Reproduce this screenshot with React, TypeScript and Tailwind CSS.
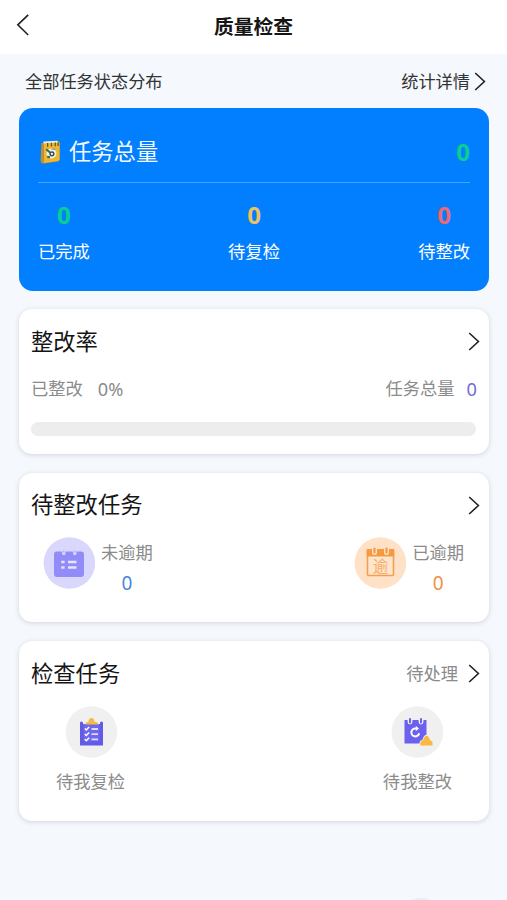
import type { ReactNode } from 'react'

function ChevronRight() {
  return (
    <svg className="block h-[19px] w-3 shrink-0" viewBox="0 0 12 19" fill="none" stroke="#222" strokeWidth="1.6">
      <path d="M1.2 1 L10.4 9.5 L1.2 18" />
    </svg>
  )
}

function NotebookIcon() {
  return (
    <svg className="block h-[25px] w-[21px] shrink-0" viewBox="0 0 22 26">
      <path d="M1.5 3 L18.5 1 Q20.5 1 20.5 3 L20.5 20 Q20.5 22 18.5 22.3 L4 24.6 Q0.5 24.5 0.6 21 Z" fill="#bd9134" />
      <path d="M3.5 1.6 L18 .7 L19.5 3 L4 4.2 Z" fill="#e8edda" />
      <path d="M4.2 3.6 L20.5 2.4 L20.5 20.2 Q20.5 21.6 18.8 21.9 L4.2 24 Z" fill="#f0b62d" />
      <path d="M8 3v4M12 2.8v4M16 2.4v4M19 2.2v4" stroke="#5b572f" strokeWidth="1.3" />
      <circle cx="12" cy="14" r="5.2" fill="#eef1e5" />
      <path d="M6.5 9.5l4 3.5M7.5 17.5l3 .5" stroke="#306a68" strokeWidth="2" />
      <circle cx="12.5" cy="14.4" r="2" fill="none" stroke="#34514e" strokeWidth="1.5" />
      <path d="M12 9.5h4" stroke="#668980" strokeWidth="1" />
    </svg>
  )
}

function PendingIcon() {
  return (
    <svg className="block size-[52px] shrink-0" viewBox="0 0 52 52">
      <circle cx="26.4" cy="26" r="25.8" fill="#dad7fc" />
      <rect x="11" y="14.5" width="30" height="25.5" rx="3" fill="#918cf7" />
      <path d="M20.8 14v2.5M31.8 14v2.5" stroke="#dad7fc" strokeWidth="3.4" strokeLinecap="round" />
      <path d="M20.8 13.5v2M31.8 13.5v2" stroke="#a9a4f8" strokeWidth="1.2" />
      <path d="M18.2 25h3.4M18.2 30.5h3.4M25 25h8.5M25 30.5h8.5" stroke="#e6e3ff" strokeWidth="2.3" />
    </svg>
  )
}

function OverdueIcon() {
  return (
    <svg className="block size-[52px] shrink-0" viewBox="0 0 52 52">
      <circle cx="26.4" cy="26" r="25.8" fill="#ffe1c7" />
      <rect x="13.5" y="13.5" width="26" height="25" rx="1" fill="#ffe5cc" stroke="#f2a04f" strokeWidth="1.6" />
      <path d="M12.7 12h27.5v7.5H12.7z" fill="#f59a3f" />
      <path d="M20.5 11.5v4M32.5 11.5v4" stroke="#ffe1c7" strokeWidth="5" strokeLinecap="round" />
      <path d="M20.5 11.5v4M32.5 11.5v4" stroke="#f59a3f" strokeWidth="2.2" strokeLinecap="round" />
      <text x="26.5" y="34.6" textAnchor="middle" fontSize="15.5" fill="#f5ad68">逾</text>
    </svg>
  )
}

function ReviewIcon() {
  return (
    <svg className="block size-[52px] shrink-0" viewBox="0 0 52 52">
      <circle cx="26.4" cy="26" r="25.8" fill="#f0f0f0" />
      <path d="M15 16.5q1.5-2 3 0V18h17v-1.5q1.5-2 3 0V39.5H15z" fill="#635be5" />
      <path d="M18.5 18h16v17.5h-16z" fill="#6f67ee" />
      <path d="M20 18.5q.5-2.5 3.6-2.8 0-3.7 2.9-3.7t2.9 3.7q3.6.3 4.1 2.8z" fill="#f5b944" />
      <path d="M19.8 22.5l1.5 1.5 2.8-3M19.8 28l1.5 1.5 2.8-3M19.8 33.2l1.5 1.5 2.8-3" fill="none" stroke="#fff" strokeWidth="1.5" />
      <path d="M26.5 23H33M26.5 28.2H33M26.5 33.4H33" stroke="#dedcff" strokeWidth="1.8" />
    </svg>
  )
}

function RectifyIcon() {
  return (
    <svg className="block size-[52px] shrink-0" viewBox="0 0 52 52">
      <circle cx="26.4" cy="26" r="25.8" fill="#f0f0f0" />
      <path d="M13.5 14h22v23.5h-22z" fill="#6b61ee" />
      <path d="M19 13.5v2.5M30 13.5v2.5" stroke="#f0f0f0" strokeWidth="4.8" strokeLinecap="round" />
      <path d="M19 13v3.5M30 13v3.5" stroke="#6b61ee" strokeWidth="2" strokeLinecap="round" />
      <path d="M26 22.6h-1.6a3.9 3.9 0 1 0 3.7 4.6" fill="none" stroke="#fff" strokeWidth="2" />
      <path d="M24.8 20l3.2 2.6-3.2 2.6z" fill="#fff" />
      <path d="M29.3 39.4v-3q0-1.2 2.5-1.8l1.8-3.8q2-2.3 4 0l1.7 3.8q2.2.6 2.2 1.8v3z" fill="#f8b940" stroke="#f0f0f0" strokeWidth="1.6" paintOrder="stroke" />
    </svg>
  )
}

function Total({ value, label, color }: { value: number; label: string; color: string }) {
  return (
    <div className="flex flex-col items-center">
      <span className={`text-[24px] leading-8 font-bold ${color}`}>{value}</span>
      <span className="mt-[9px] text-[17.3px] leading-6 text-white">{label}</span>
    </div>
  )
}

type CardProps = { title: string; extra?: string; height: string; heading: string; children: ReactNode }

function Card({ title, extra, height, heading, children }: CardProps) {
  return (
    <section className={`rounded-[13px] bg-white pr-[9px] pl-3 shadow-[0_1px_5px_rgba(50,50,60,0.18)] ${height}`}>
      <div className={`flex items-center justify-between ${heading}`}>
        <h2 className="text-[22.3px] leading-8 text-[#151515]">{title}</h2>
        <div className="flex items-center gap-2.5 text-[17.3px] text-[#8b8b8b]">
          {extra && <span>{extra}</span>}
          <ChevronRight />
        </div>
      </div>
      {children}
    </section>
  )
}

function Status({ icon, label, color }: { icon: ReactNode; label: string; color: string }) {
  return (
    <div className="flex gap-1.5">
      {icon}
      <div className="flex flex-col items-center pt-1 text-[17.3px] text-[#8b8b8b]">
        <span className="leading-6">{label}</span>
        <span className={`mt-1 text-[19px] leading-7 ${color}`}>0</span>
      </div>
    </div>
  )
}

export default function App() {
  return (
    <div className="relative h-[900px] w-[507px] overflow-hidden bg-[#f5f9fe] font-['Noto_Sans','Noto_Sans_CJK_SC',sans-serif]">
      <header className="grid h-[54px] grid-cols-[40px_1fr_40px] items-center bg-white">
        <svg className="mb-1 ml-4 block h-[22px] w-[13px]" viewBox="0 0 13 22" fill="none" stroke="#222" strokeWidth="1.6">
          <path d="M12.2 .8 L1.8 10.8 L12.2 21" />
        </svg>
        <h1 className="text-center text-[19.8px] font-bold text-[#151515]">质量检查</h1>
      </header>
      <main className="pr-[18px] pl-[19px]">
        <div className="flex h-[54px] items-center justify-between pt-0.5 pr-[3px] pl-1.5 text-[17.2px] text-[#333]">
          <span>全部任务状态分布</span>
          <div className="flex items-center gap-1">
            <span>统计详情</span>
            <ChevronRight />
          </div>
        </div>
        <section className="h-[183px] rounded-[14px] bg-[#027fff] px-[19px]">
          <div className="flex h-[75px] items-center justify-between border-b border-[#48a5ff] pt-3.5">
            <div className="flex items-center gap-2 pl-0.5">
              <NotebookIcon />
              <span className="text-[22.3px] text-[#f2faff]">任务总量</span>
            </div>
            <span className="text-[24px] font-bold text-[#08cf91]">0</span>
          </div>
          <div className="flex justify-between pt-4">
            <Total value={0} label="已完成" color="text-[#08cf91]" />
            <Total value={0} label="待复检" color="text-[#eac163]" />
            <Total value={0} label="待整改" color="text-[#ec6874]" />
          </div>
        </section>
        <div className="mt-[18px] flex flex-col gap-[19px]">
          <Card title="整改率" height="h-[145px]" heading="h-[65px]">
            <div className="flex items-center justify-between pt-px pr-[3px] text-[17.3px] leading-7 text-[#8b8b8b]">
              <div className="flex gap-[15px]">
                <span>已整改</span>
                <span className="text-[18.2px]">0%</span>
              </div>
              <div className="flex gap-3">
                <span>任务总量</span>
                <span className="text-[18.2px] text-[#746bd5]">0</span>
              </div>
            </div>
            <div className="mt-[19px] mr-1 h-[14px] rounded-full bg-[#ededed]" />
          </Card>
          <Card title="待整改任务" height="h-[149px]" heading="h-16">
            <div className="flex justify-between pr-4 pl-3">
              <Status icon={<PendingIcon />} label="未逾期" color="text-[#4687dd]" />
              <Status icon={<OverdueIcon />} label="已逾期" color="text-[#f19143]" />
            </div>
          </Card>
          <Card title="检查任务" extra="待处理" height="h-[180px]" heading="h-[65px]">
            <div className="flex justify-between pr-7 pl-[25px] text-[17.3px] text-[#8b8b8b]">
              <div className="flex flex-col items-center gap-3">
                <ReviewIcon />
                <span className="leading-6">待我复检</span>
              </div>
              <div className="flex flex-col items-center gap-3">
                <RectifyIcon />
                <span className="leading-6">待我整改</span>
              </div>
            </div>
          </Card>
        </div>
      </main>
      <div className="absolute top-[898px] left-[395px] size-[52px] rounded-full bg-[#e8eafa]" />
    </div>
  )
}
